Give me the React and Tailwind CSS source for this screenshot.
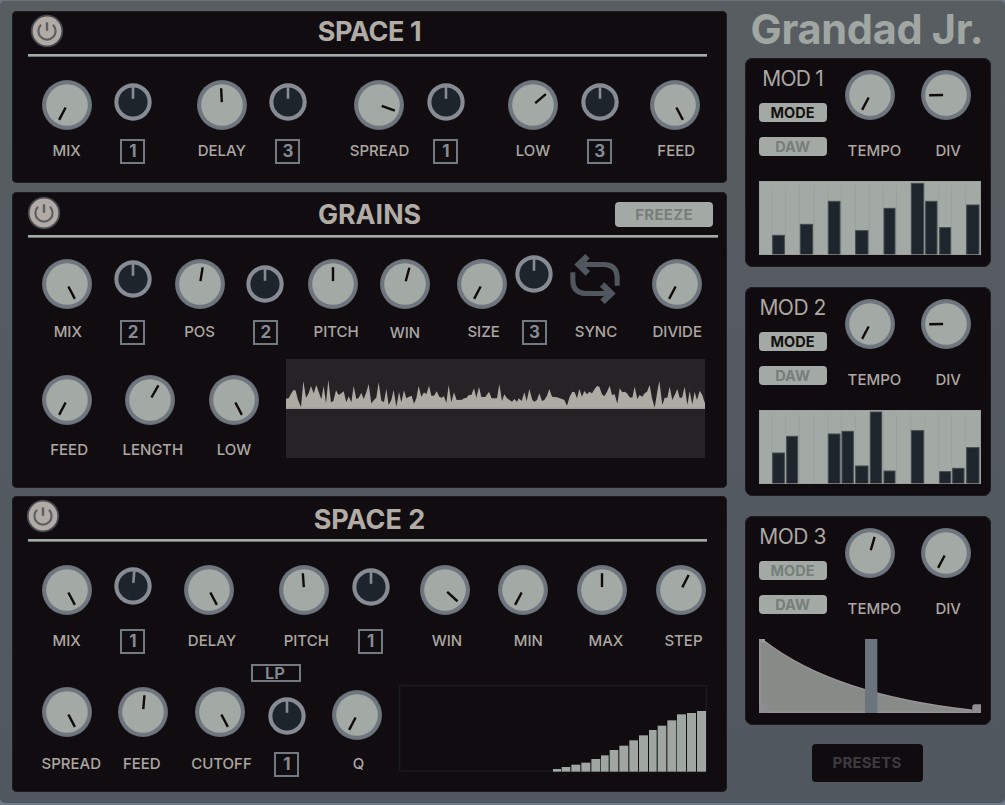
import React, { useState } from "react";

const WAVE = [
  [0, 132], [10, 130], [18, 115], [25, 104], [31, 107], [38, 135], [47, 156], [54, 78], [62, 128], [70, 115],
  [77, 93], [85, 115], [93, 90], [100, 110], [108, 133], [115, 93], [122, 145], [129, 74], [137, 142], [144, 138],
  [152, 106], [160, 120], [168, 115], [175, 109], [183, 142], [190, 124], [198, 142], [205, 93], [213, 132], [220, 128],
  [228, 113], [235, 132], [243, 112], [250, 87], [258, 145], [266, 135], [273, 128], [280, 82], [288, 137], [296, 141],
  [303, 101], [310, 150], [318, 135], [325, 105], [333, 155], [341, 110], [348, 142], [356, 106], [363, 130], [371, 125],
  [379, 122], [386, 146], [393, 130], [400, 93], [408, 125], [416, 112], [423, 118], [431, 92], [438, 122], [446, 122],
  [454, 109], [462, 125], [468, 128], [476, 124], [483, 144], [490, 90], [498, 142], [506, 112], [514, 135], [530, 134],
  [536, 130], [543, 129], [550, 120], [558, 120], [566, 100], [573, 128], [581, 95], [588, 126], [600, 126], [611, 110],
  [619, 130], [635, 130], [642, 87], [650, 138], [657, 118], [665, 130], [680, 140], [687, 132], [695, 140], [700, 130],
  [709, 138], [717, 112], [724, 138], [732, 102], [741, 135], [747, 140], [755, 135], [762, 115], [770, 138], [777, 135],
  [785, 122], [792, 102], [800, 125], [815, 127], [830, 132], [837, 135], [845, 152], [853, 125], [861, 110], [868, 112],
  [875, 130], [882, 102], [890, 125], [897, 108], [905, 118], [912, 110], [920, 115], [928, 102], [935, 93], [942, 95],
  [950, 118], [957, 124], [965, 110], [973, 92], [980, 120], [988, 118], [996, 146], [1003, 100], [1011, 112], [1018, 110],
  [1025, 115], [1033, 127], [1041, 128], [1048, 95], [1056, 132], [1063, 120], [1071, 125], [1078, 115], [1085, 110], [1093, 90],
  [1100, 130], [1108, 158], [1115, 115], [1122, 78], [1131, 150], [1138, 128], [1146, 128], [1153, 95], [1161, 135], [1168, 120],
  [1176, 102], [1183, 128], [1190, 128], [1198, 95], [1206, 150], [1213, 108], [1221, 148], [1228, 110], [1235, 135], [1243, 107],
  [1251, 120], [1259, 145],
];

// x, width, height in thirds of a pixel
const MOD1_STEPS = [
  [40, 37, 60], [123, 39, 93], [207, 37, 162], [289, 39, 74], [374, 35, 141],
  [456, 39, 216], [499, 36, 162], [541, 35, 83], [622, 39, 151],
];
const MOD2_STEPS = [
  [40, 37, 94], [82, 35, 144], [207, 37, 151], [248, 36, 159], [289, 39, 55], [333, 36, 217],
  [374, 35, 40], [456, 39, 161], [541, 35, 38], [580, 36, 48], [622, 39, 110],
];
const DIVIDERS = [38, 80, 121, 165, 206, 247, 289, 331, 373, 412, 456, 497, 539, 578, 620, 664];

const FILTER_BARS = [
  [462, 24, 8], [488, 26, 14], [517, 27, 21], [547, 27, 27], [577, 27, 38], [606, 23, 49], [632, 26, 65], [661, 27, 78],
  [691, 26, 94], [720, 27, 109], [750, 23, 125], [776, 26, 138], [805, 27, 154], [834, 27, 172], [864, 27, 176], [894, 27, 182],
];

const Knob = ({ angle = 0 }) => (
  <svg width="50" height="50" viewBox="-25 -25 50 50" className="shrink-0">
    <circle r="25" fill="#687078" />
    <circle r="24" fill="#70767f" />
    <circle r="20.8" fill="#a3aaa5" />
    <line y1="-16.8" y2="-2.9" stroke="#0f0b08" strokeWidth="2.4" transform={`rotate(${angle})`} />
  </svg>
);

const SmallKnob = ({ angle = 0 }) => (
  <svg width="38" height="38" viewBox="-19 -19 38 38" className="shrink-0">
    <circle r="18.7" fill="#868b94" />
    <circle r="14.6" fill="#1e242c" />
    <line y1="-15" y2="-3.2" stroke="#868b94" strokeWidth="2.6" transform={`rotate(${angle})`} />
  </svg>
);

const Label = ({ children, className = "" }) => (
  <span className={`mt-auto h-[25px] shrink-0 whitespace-nowrap text-[15px] font-medium leading-[24px] text-[#aca7a3] ${className}`}>
    {children}
  </span>
);

// main parameter: large knob with its name below
const Param = ({ name, angle, className = "", knob = "", label = "" }) => (
  <div className={`flex w-[50px] shrink-0 flex-col items-center ${className}`}>
    <div className={knob}>
      <Knob angle={angle} />
    </div>
    <Label className={label}>{name}</Label>
  </div>
);

// modulation amount: small knob with the number of its source
const ModAmount = ({ source, angle, className = "", knob = "", box = "" }) => (
  <div className={`flex w-[38px] shrink-0 flex-col items-center ${className}`}>
    <div className={knob}>
      <SmallKnob angle={angle} />
    </div>
    <div className={`mt-auto ${box}`}>
      <div className="flex h-[25px] w-[25px] items-center justify-center border-2 border-[#727981] text-[17px] font-bold leading-none text-[#858b94]">
        {source}
      </div>
    </div>
  </div>
);

const PowerButton = ({ className = "" }) => {
  const [on, setOn] = useState(true);
  return (
    <button className={`h-[34px] w-[34px] ${on ? "" : "opacity-50"} ${className}`} onClick={() => setOn(!on)}>
      <svg width="34" height="34" viewBox="-17 -17 34 34">
        <circle r="16.2" fill="#454a50" />
        <circle r="14.4" fill="#b1aaa5" />
        <path d="M-5.9 -6.2 A8.6 8.6 0 1 0 5.9 -6.2" fill="none" stroke="#5d5f62" strokeWidth="2.2" />
        <line y1="-8.7" y2="-0.2" stroke="#5d5f62" strokeWidth="2.4" />
      </svg>
    </button>
  );
};

const Header = ({ title, power, titleClass = "", line = "w-[679px]", children }) => (
  <div className="shrink-0">
    <div className="grid h-[43px] grid-cols-[1fr_auto_1fr] items-center">
      <div className="flex">
        <PowerButton className={power} />
      </div>
      <h2 className={`font-bold leading-[30px] text-[#b1aca6] ${titleClass}`}>{title}</h2>
      <div className="flex justify-end">{children}</div>
    </div>
    <div className={`ml-4 h-[3px] border-b border-[#6f7671] bg-[#a5aba6] ${line}`} />
  </div>
);

const SyncIcon = () => (
  <svg width="50" height="50" viewBox="44.5 42.5 150 150" fill="none" stroke="#50575e" strokeWidth="15" className="overflow-visible">
    <path d="M72 74 H148 Q186 76 186 114 V138" />
    <path d="M97 49 L71 74 L98 101" strokeWidth="19" />
    <path d="M167 161 H91 Q53 159 53 121 V97" />
    <path d="M142 186 L168 161 L141 134" strokeWidth="19" />
  </svg>
);

const Waveform = () => {
  const points = WAVE.map(([x, y]) => `${x},${y}`).join(" ");
  return (
    <svg width="419" height="99" viewBox="2 12 1257 297" className="ml-[26.7px] bg-[#262225]">
      <polygon points={`0,161 ${points} 1259,161`} fill="#aeaaa4" />
      <rect x="0" y="158" width="1260" height="4" fill="#9e9a98" />
    </svg>
  );
};

const FilterGraph = () => (
  <svg width="308" height="87" viewBox="0 0 924 261" className="-mt-[2px] ml-[17.3px]">
    <rect x="2" y="2" width="920" height="256" fill="none" stroke="#191c20" strokeWidth="4" />
    {FILTER_BARS.map(([x, w, h]) => (
      <rect key={x} x={x} y={260 - h} width={w} height={h} fill="#a0a6a2" />
    ))}
  </svg>
);

const StepDisplay = ({ steps }) => (
  <svg width="222" height="74" viewBox="0 0 666 222" className="bg-[#a3aaa5]">
    {DIVIDERS.map((x) => (
      <line key={x} x1={x} x2={x} y1="12" y2="222" stroke="#999f9b" strokeWidth="2.5" />
    ))}
    {steps.map(([x, w, h]) => (
      <rect key={x} x={x + 1} y={223 - h} width={w - 2} height={h + 2} fill="#1f252c" stroke="#434a4e" strokeWidth="3" />
    ))}
    <rect x="1" y="1" width="664" height="220" fill="none" stroke="#989e9a" strokeWidth="2" />
  </svg>
);

const CurveDisplay = () => (
  <svg width="222" height="74" viewBox="0 0 666 222">
    <path d="M0 0 H18 V8 C150 110 350 182 640 214 V222 H0 Z" fill="#868b87" />
    <path d="M18 8 C150 110 350 182 640 214" fill="none" stroke="#979294" strokeWidth="5" />
    <path d="M2 0 V220 H666" fill="none" stroke="#979294" strokeWidth="5" />
    <rect width="18" height="12" fill="#979896" />
    <rect y="196" width="26" height="26" rx="6" fill="#908d90" />
    <path d="M640 222 V204 Q640 196 648 196 H666 V222 Z" fill="#908d90" />
    <rect x="318" width="37" height="222" fill="#6b737c" />
  </svg>
);

const Toggle = ({ on, className = "", children }) => (
  <button
    className={`block h-[19px] w-[68px] rounded-[4px] bg-[#a3aaa5] text-[14.5px] font-bold leading-[17px] ${on ? "text-[#13100e]" : "text-[#787e7a]"} ${className}`}
  >
    {children}
  </button>
);

const ModPanel = ({ title, titleClass = "", mode, tempo, div, className = "", children }) => (
  <section className={`h-[209px] w-[246px] shrink-0 rounded-[8px] bg-[#100b0f] pl-[13.6px] shadow-[inset_0_0_0_1px_#1d1c21] ${className}`}>
    <div className="flex h-[123px]">
      <div className="w-[68px]">
        <h3 className={`mt-2 flex h-[25px] justify-center whitespace-nowrap text-[21px] leading-[25px] text-[#aca7a3] ${titleClass}`}>{title}</h3>
        <Toggle on={mode} className="mt-3">MODE</Toggle>
        <Toggle className="mt-[15.4px]">DAW</Toggle>
      </div>
      <div className="mt-3 flex h-[94px]">
        <Param name="TEMPO" angle={tempo} className="ml-[18.1px]" label="pl-[9.5px]" />
        <Param name="DIV" angle={div} className="ml-[26.3px]" label="pl-[4.5px]" />
      </div>
    </div>
    {children}
  </section>
);

const panel = "shrink-0 w-[715px] rounded-[5px] bg-[#110c10] shadow-[inset_0_0_0_1px_#1d1c21]";

const App = () => {
  return (
    <div className="h-[805px] w-[1005px] overflow-hidden bg-[#6f7b89] font-['Inter','Liberation_Sans',sans-serif]">
      <div className="flex h-[803px] rounded-[5px] border-t border-[#6c7378] bg-linear-to-b from-[#585d61] to-[#50575f] pl-3">
        <main className="flex w-[715px] flex-col pt-[10px]">
          <section className={`h-[172px] ${panel}`}>
            <Header title="SPACE 1" power="ml-[17.7px] -mt-[3px]" titleClass="-mt-[2px] text-[27px] tracking-[-0.4px]" />
            <div className="mt-[22.5px] flex h-[84.5px]">
              <Param name="MIX" angle={-152} className="ml-[29.6px]" />
              <ModAmount source="1" className="ml-[22.4px]" knob="mt-[3.5px]" />
              <Param name="DELAY" angle={-3} className="ml-[44.8px]" />
              <ModAmount source="3" className="ml-[22.2px]" knob="mt-[3.5px]" />
              <Param name="SPREAD" angle={110} className="ml-[47.5px]" />
              <ModAmount source="1" className="ml-[22.5px]" knob="mt-[3.5px]" />
              <Param name="LOW" angle={50} className="ml-[43px]" />
              <ModAmount source="3" className="ml-[22.7px]" knob="mt-[3.5px]" />
              <Param name="FEED" angle={152} className="ml-[31.1px]" label="pl-[3px]" />
            </div>
          </section>

          <section className={`mt-[9px] h-[296px] ${panel}`}>
            <Header title="GRAINS" power="ml-[15.3px] -mt-[1px]" titleClass="text-[26.8px]" line="w-[690px]">
              <button className="mr-[14px] mt-[2px] h-[25px] w-[98px] rounded-[4px] bg-[#a3aaa5] text-[15px] font-bold leading-[23px] tracking-[0.3px] text-[#787e7a]">
                FREEZE
              </button>
            </Header>
            <div className="mt-[21.3px] flex h-[85.7px]">
              <Param name="MIX" angle={152} className="ml-[29.6px]" label="pl-[2.4px]" />
              <ModAmount source="2" className="ml-[22.4px]" knob="mt-px" />
              <Param name="POS" angle={9} className="ml-[22.7px]" />
              <ModAmount source="2" className="ml-[21.1px]" knob="mt-[6px]" box="pl-[2.4px]" />
              <Param name="PITCH" angle={0} className="ml-[23.9px]" label="pl-[7px]" />
              <Param name="WIN" angle={15} className="ml-[22.3px]" label="pt-px" />
              <Param name="SIZE" angle={-152} className="ml-[26.7px]" label="pl-[4px]" />
              <ModAmount source="3" className="ml-[8.8px]" knob="-mt-1" />
              <div className="ml-[16.5px] flex w-[50px] shrink-0 flex-col items-center">
                <div className="-mt-[5px]">
                  <SyncIcon />
                </div>
                <Label className="pl-[2px]">SYNC</Label>
              </div>
              <Param name="DIVIDE" angle={-152} className="ml-[32.3px]" />
            </div>
            <div className="mt-[14px] flex">
              <div className="mt-4 flex h-[88px]">
                <Param name="FEED" angle={-152} className="ml-[29.6px]" label="pl-[5px]" />
                <Param name="LENGTH" angle={30} className="ml-[33.7px]" label="pl-[5px]" />
                <Param name="LOW" angle={152} className="ml-[33.7px]" />
              </div>
              <Waveform />
            </div>
          </section>

          <section className={`mt-2 h-[296px] ${panel}`}>
            <Header title="SPACE 2" power="ml-[14px] -mt-[3.5px]" titleClass="pt-[4px] text-[27px]" />
            <div className="mt-[22.5px] flex h-[89.5px]">
              <Param name="MIX" angle={152} className="ml-[29.6px]" />
              <ModAmount source="1" angle={5} className="ml-[22.4px]" knob="mt-[2px]" />
              <Param name="DELAY" angle={152} className="ml-[32.5px]" label="pl-[5px]" />
              <Param name="PITCH" angle={-4} className="ml-[44.5px]" label="pl-[4.6px]" />
              <ModAmount source="1" className="ml-[22.7px]" knob="mt-[3px]" />
              <Param name="WIN" angle={132} className="ml-[30.3px]" label="pl-[4px]" />
              <Param name="MIN" angle={-152} className="ml-[28.5px]" label="pl-[9.6px]" />
              <Param name="MAX" angle={0} className="ml-[28.8px]" label="pl-[7.4px]" />
              <Param name="STEP" angle={27} className="ml-[28.7px]" label="pl-[5px]" />
            </div>
            <div className="ml-[239px] mt-[10px] flex h-[18px] w-[50px] items-center justify-center border-2 border-[#727981] pr-[2px] text-[16.5px] font-semibold leading-none text-[#858b94]">
              LP
            </div>
            <div className="mt-[4.5px] flex h-[90.5px]">
              <Param name="SPREAD" angle={152} className="ml-[29.6px]" label="pl-[9.4px]" />
              <Param name="FEED" angle={5} className="ml-[26.4px]" label="pr-[2.4px]" />
              <Param name="CUTOFF" angle={152} className="ml-[27.5px]" label="pl-[2px]" />
              <ModAmount source="1" className="ml-[22.5px]" knob="mt-[10px]" />
              <Param name="Q" angle={-152} className="ml-[26px]" knob="mt-[3px]" label="pl-[3px]" />
              <FilterGraph />
            </div>
          </section>
        </main>

        <aside className="ml-[18px] flex w-[246px] flex-col items-center">
          <h1 className="flex h-[57px] w-[246px] shrink-0 justify-center whitespace-nowrap pr-[2px] text-[41.5px] font-bold leading-[57px] tracking-[-0.3px] text-[#a0a7a2]">
            Grandad Jr.
          </h1>
          <ModPanel title="MOD 1" titleClass="tracking-[-0.8px]" mode tempo={-152} div={-91}>
            <StepDisplay steps={MOD1_STEPS} />
          </ModPanel>
          <ModPanel title="MOD 2" titleClass="tracking-[-0.5px]" mode tempo={-152} div={-91} className="mt-5">
            <StepDisplay steps={MOD2_STEPS} />
          </ModPanel>
          <ModPanel title="MOD 3" titleClass="tracking-[-0.5px]" tempo={16} div={-152} className="mt-5">
            <CurveDisplay />
          </ModPanel>
          <button className="mr-[2px] mt-[19px] h-[38px] w-[111px] shrink-0 rounded-[4px] bg-[#100b0f] text-[15px] font-bold leading-[36px] tracking-[0.2px] text-[#3e3b3f]">
            PRESETS
          </button>
        </aside>
      </div>
    </div>
  );
};

export default App;
